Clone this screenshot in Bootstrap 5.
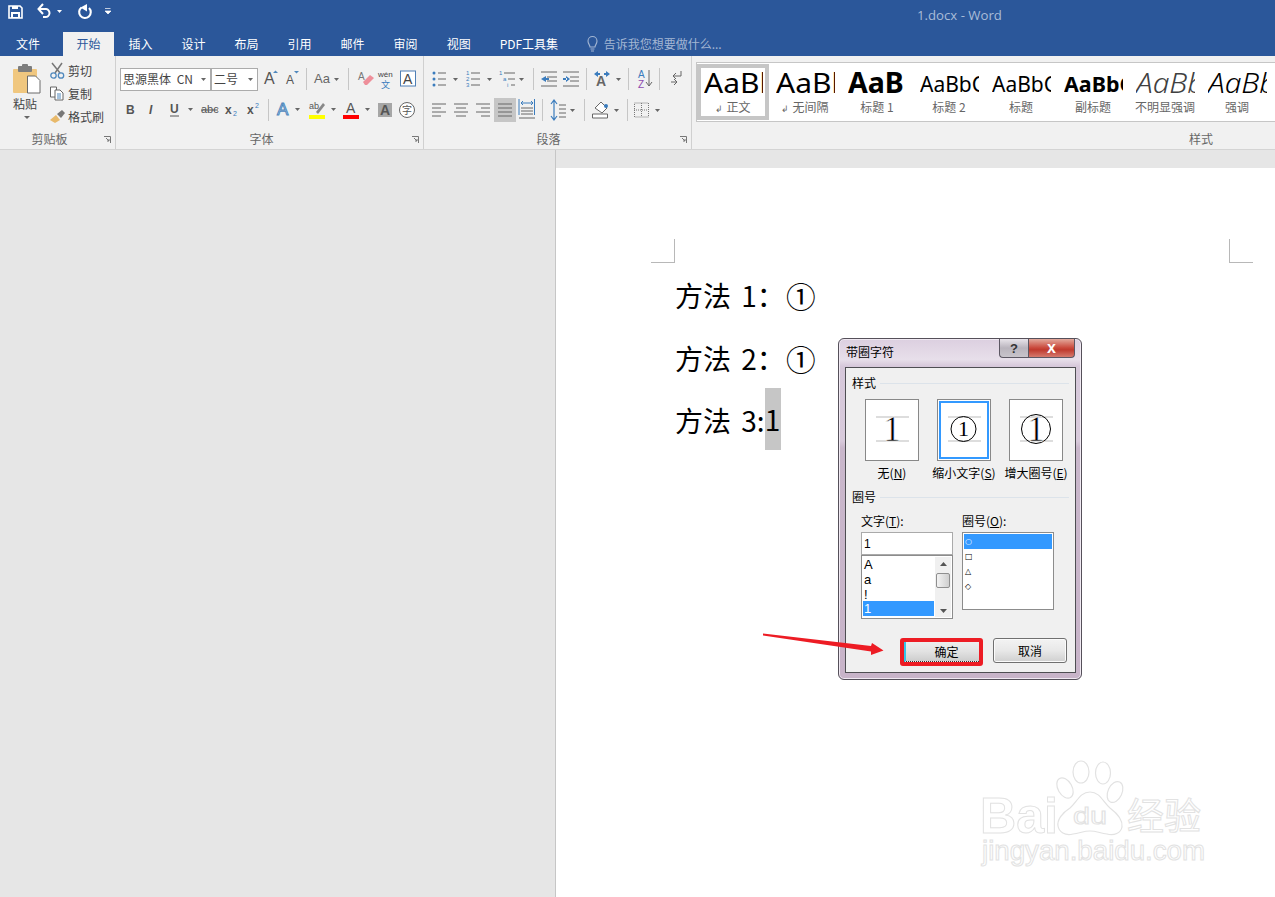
<!DOCTYPE html>
<html lang="zh-CN"><head><meta charset="utf-8"><title>1.docx - Word</title>
<link href="https://cdn.jsdelivr.net/npm/bootstrap@5.3.0/dist/css/bootstrap.min.css" rel="stylesheet">
<style>
html,body{height:100%;overflow:hidden}
body{position:relative;font:12px/16px "Noto Sans CJK SC","Noto Sans",sans-serif;background:#e6e6e6;color:#444}
svg{display:block;flex:none;overflow:visible}
.tbar{height:32px;background:#2b579a;color:#fff}
.qat{padding-left:8px;padding-top:4px}
.doc-title{margin-left:806px;margin-top:1px;font:13.2px/20px "Open Sans",sans-serif;color:#a9bcd8}
.tabs{height:24px;background:#2b579a;padding-left:1.5px}
.tabs .nav-link{height:24px;padding:3px 14.5px 0;color:#fff;font-size:12px;line-height:18px;border-radius:0}
.tabs .nav-link:first-child{padding-right:23px}
.tabs .nav-link.active{background:#f1f1f1;color:#2b579a;padding:3px 13.5px 0}
.bulb{margin-left:14px}
.tellme{color:#a3b6d3;margin-left:6px;padding-top:3px;line-height:18px}
.ribbon{height:94px;background:#f1f1f1;border-bottom:1px solid #d4d4d4}
.grp{height:93px;border-right:1px solid #d0d0d0;flex:none;padding-top:3px}
.g1{width:116px}.g2{width:308px;padding-left:4px}.g3{width:268px;padding-left:8px}.g4{flex:1 1 0;border-right:0;padding-left:4px}
.rows{padding-top:8px}
.row1,.row2{height:24px;display:flex;align-items:center}
.row2{margin-top:7px}
.glabel{margin-top:auto;margin-bottom:1px;height:18px;display:grid;grid-template-columns:1fr auto 1fr 20px;align-items:center;color:#666;line-height:18px}
.g1 .glabel{grid-template-columns:1fr auto 1fr 16px}
.g3 .glabel{grid-template-columns:1fr auto 1fr 26px}
.glabel.gs{grid-template-columns:1fr auto 1fr;padding-left:431px}
.launch{justify-self:end;margin-right:4px}
.sep{display:block;width:1px;height:22px;background:#c6c6c6;flex:none}
.l3{margin-left:3px}.l4{margin-left:4px}.l5{margin-left:5px}.l6{margin-left:6px}.l7{margin-left:7px}.l8{margin-left:8px}.l9{margin-left:9px}.l10{margin-left:10px}.l13{margin-left:13px}.l14{margin-left:14px}.l15{margin-left:15px}
.combo{height:23px;background:#fff;border:1px solid #ababab;color:#444;padding-left:2px;word-spacing:3px}
.combo.c1{width:91px}.combo.c2{width:47px;border-left-width:1px}
.combo svg{margin-left:auto;margin-right:4px}
.paste{width:50px;padding-left:13px;padding-top:5px}
.paste .lb{margin-top:1px;color:#444;line-height:18px}
.clip-item{height:23px;color:#444}
.clip-item svg{margin-right:3px}
.gallery{margin-top:3px;height:60px;background:#fff;border:1px solid #c6c6c6;border-right:0;padding:1px 0 0 0;overflow:hidden}
.sty{width:72px;height:56px;flex:none;padding:0 0 0 7px;overflow:hidden}
.sty.sel{border:4px solid #c6c6c6;padding-left:3px}
.sty.sel .s{margin-top:-4px}.sty.sel .n{margin-left:-7px}
.s{width:59px;height:34px;padding-top:2px;overflow:hidden;white-space:nowrap;font:28px/32px "Noto Sans",sans-serif;color:#000}
.s span{display:inline-block;transform-origin:0 50%;transform:scaleX(1.07)}
.s.h2t{font-size:21px;line-height:28px;padding-top:6px}
.s.h2t span{transform:none}
.s.b{font-weight:700}
.s.b span{transform:scaleX(1.02)}
.s.it{font-style:italic;font-weight:300}
.s.sub{color:#404040}
.n{margin-left:-7px;width:72px;text-align:center;color:#666;line-height:18px}
.ret{font-size:9px;margin-right:3px}
.workspace{height:747px}
.gutter{width:556px;flex:none;border-right:1px solid #c6c6c6}
.page{width:719px;flex:none;margin-top:18px;background:#fff;color:#000;padding-top:71px}
.marks{padding:0 22px 0 95px}
.mk{width:24px;height:24px;border-bottom:1px solid #b8b8b8}
.mk.a{border-right:1px solid #b8b8b8}.mk.b{border-left:1px solid #b8b8b8}
.dtext{padding-left:119px;font:28px/62.5px "Noto Sans CJK SC","Noto Sans",sans-serif;margin:1px 0 0;word-spacing:4px}
.dtext p{margin:0;height:62.5px;white-space:pre}
.dtext .cir{margin-left:1px;display:inline-block;transform:scale(1.06);transform-origin:0 55%}
.dtext mark{background:#c6c6c6;padding:0;color:#000;display:inline-block;height:62px;line-height:62px;vertical-align:top;margin-top:-1px;width:16px;text-align:center}
.dlg{position:absolute;left:838px;top:338px;width:244px;height:342px;border:1px solid #55505a;border-radius:6px;background:linear-gradient(180deg,#dccfe0 0,#e7dfea 6%,#d6c8da 8%,#d8cadb 30%,#c9b7cb 32%,#c8b4c9 100%);color:#000;box-shadow:inset 0 0 0 1px #f0e9f2}
.dlg-t{height:28px;padding:5px 0 0 7px;line-height:16px}
.dlg-btns{position:absolute;right:6px;top:0;display:flex;height:19px}
.hb,.xb{height:19px;border:1px solid #5c5763;border-top:0;display:flex;align-items:center;justify-content:center;font:700 13px/1 "Liberation Sans",sans-serif}
.hb{width:29px;border-radius:0 0 0 4px;border-right:0;background:linear-gradient(#e8e4ea,#b9b4bd 50%,#c8c4cb);color:#333}
.xb{width:47px;border-radius:0 0 4px 0;background:linear-gradient(#e3a99c,#c9473a 50%,#bf3a2e 60%,#d57a6e);color:#fff;font-size:16px}
.panel{margin:0 5.5px 0 6px;height:306px;background:#f0f0f0;border:1px solid #4e4e52;display:flex;flex-direction:column}
.lg{height:16px;padding-left:6px;display:flex;align-items:center;gap:4px;padding-right:6px}
.lg.first{margin-top:7px}.lg.second{margin-top:8px}
.lg::after{content:"";flex:1;height:1px;background:#dce3ea}
.boxes{margin:8px 0 0 10px;display:grid;grid-template-columns:repeat(3,72px)}
.bx{width:54px;height:62px;margin:0 9px;background:#fff;border:1px solid #888;padding:0}
.bx.on{box-shadow:inset 0 0 0 1px #fff,inset 0 0 0 3px #3399ff}
.bx text{font-family:"Liberation Serif",serif;stroke:#fff;stroke-width:.6}
.bx.on text{stroke:none}
.bl{text-align:center;white-space:nowrap;margin-top:4px;height:16px;line-height:16px;font-size:12px}
.cols{display:flex;padding-left:15px;margin-top:8px;gap:9px}
.col-a,.col-b{width:92px}
.cap{height:16px;margin-bottom:3px}
.inp{height:23px;border:1px solid #aaa;border-radius:0;padding:0 2px;font:12px/21px "Liberation Sans",sans-serif;background:#fff;color:#000;display:block;width:100%;min-height:0}
.lst{border:1px solid #8c8c8c;background:#fff;padding:1px;border-radius:0}
.lst.l-a{height:64px;flex-direction:row}
.lst.l-b{height:78px}
.lst .list-group-item{border:0;border-radius:0;padding:0 1px;height:15px;font:13px/15px "Liberation Sans",sans-serif;color:#000;background:transparent}
.lst .list-group-item.active{background:#3399ff;color:#fff}
.lst.l-b .list-group-item{font:8px/15px "DejaVu Sans",sans-serif}
.sb{width:16px;flex:none;background:#f0f0f0;margin-left:1px;display:flex;flex-direction:column;align-items:center;padding-top:5px}
.sb i{display:block;width:14px;height:15px;margin-top:7px;border:1px solid #8f8f8f;border-radius:2px;background:linear-gradient(90deg,#f3f3f3,#cfcfcf)}
.ft{display:flex;padding-left:54px;margin-top:19px;align-items:flex-start;gap:10px}
.redbox{width:83px;height:28px;border:4px solid #ed1c24;border-radius:3px;padding:0}
.redbox .btn,.cancel{font-size:12px;line-height:16px;color:#000;padding:0;border-radius:0}
.redbox .btn{width:100%;height:100%;display:block;border:0;padding-left:8px;border-left:2px solid #35c4e8;border-bottom:1px dotted #333;background:linear-gradient(#ededed,#e2e2e2 50%,#cdcdcd)}
.cancel{width:74px;height:25px;border:1px solid #707070;border-radius:3px;background:linear-gradient(#f3f3f3,#e8e8e8 50%,#cfcfcf);box-shadow:inset 0 0 0 1px #fbfbfb}
.arrow{position:absolute;left:760px;top:630px}
.wm{position:absolute;left:960px;top:750px;pointer-events:none}
.wm text{fill:#fff;stroke:#e2e2e2;stroke-width:1}
.wm ellipse,.wm .pb{fill:#fff;stroke:#e2e2e2;stroke-width:1.2}
.t{font-family:"Liberation Sans",sans-serif}
</style></head><body>

<header>
<div class="tbar d-flex align-items-start qat">
 <svg width="15" height="15"><path d="M1 2h11l2 2v10H1z" fill="none" stroke="#fff" stroke-width="1.600"/><rect x="4" y="2" width="6" height="3" fill="#fff"/><rect x="3" y="8" width="9" height="6" fill="#fff"/><rect x="5" y="10" width="5" height="3" fill="#2b579a"/></svg>
 <svg class="l14" width="15" height="15"><path d="M2 5h7a4 4 0 1 1-1 8H6" fill="none" stroke="#fff" stroke-width="2"/><path d="M6 0 1.500 5 6 10" fill="none" stroke="#fff" stroke-width="2"/></svg>
 <svg class="l5" width="5" height="15"><path d="M0 6h5L2.500 9z" fill="#fff"/></svg>
 <svg class="l15" width="15" height="15"><path d="M4.500 3.500a5.800 5.800 0 1 0 7.500.5" fill="none" stroke="#fff" stroke-width="2.100"/><path d="M10 0v7.500L3.500 3.500z" fill="#fff"/></svg>
 <svg class="l13" width="6" height="15"><path d="M0 4.500h5.500M0 7h6L3 10z" stroke="#fff" fill="#fff" stroke-width=".7"/></svg>
 <div class="doc-title">1.docx - Word</div>
</div>
<nav class="tabs nav flex-nowrap">
 <a class="nav-link" href="#">文件</a><a class="nav-link active" href="#">开始</a><a class="nav-link" href="#">插入</a><a class="nav-link" href="#">设计</a><a class="nav-link" href="#">布局</a><a class="nav-link" href="#">引用</a><a class="nav-link" href="#">邮件</a><a class="nav-link" href="#">审阅</a><a class="nav-link" href="#">视图</a><a class="nav-link" href="#">PDF工具集</a>
 <svg class="bulb" width="11" height="24"><path d="M3 15c0-2-2-3-2-6a4.500 4.500 0 0 1 9 0c0 3-2 4-2 6zM3.500 17h4M4 19h3" fill="none" stroke="#a3b6d3" stroke-width="1.100"/></svg>
 <div class="tellme">告诉我您想要做什么...</div>
</nav>
</header>

<section class="ribbon d-flex">
 <div class="grp g1 d-flex flex-column">
  <div class="d-flex">
   <div class="paste">
    <svg width="28" height="30"><rect x="0" y="5" width="24" height="24" rx="1" fill="#f0c77f"/><rect x="5" y="2" width="14" height="6" rx="1" fill="#7d7d7d"/><rect x="9" y="0" width="6" height="4" rx="1" fill="#7d7d7d"/><path d="M14.500 12h8l4.500 4.500V29H14.500z" fill="#fff" stroke="#6a6a6a"/></svg>
    <div class="lb">粘贴</div>
    <svg width="24" height="8"><path d="M11 3h6l-3 3z" fill="#666"/></svg>
   </div>
   <div>
    <div class="clip-item d-flex align-items-center"><svg width="15" height="16"><path d="M2 0l8 10M12 0 5 10" stroke="#777" stroke-width="1.500"/><circle cx="3.500" cy="12.500" r="2.700" fill="none" stroke="#4f88bd" stroke-width="1.300"/><circle cx="11" cy="12.500" r="2.700" fill="none" stroke="#4f88bd" stroke-width="1.300"/></svg>剪切</div>
    <div class="clip-item d-flex align-items-center"><svg width="15" height="15"><path d="M.5 1h6v10h-6z" fill="#fff" stroke="#666"/><path d="M5 4h5l3 3v7H5z" fill="#fff" stroke="#666"/><path d="M7 8h4M7 10h4M7 12h4" stroke="#4f88bd"/></svg>复制</div>
    <div class="clip-item d-flex align-items-center"><svg width="15" height="14"><path d="M0 10l6-5 4 5-5 3z" fill="#e8b96a"/><path d="M7 4l5-4 3 3-4 5z" fill="#777"/></svg>格式刷</div>
   </div>
  </div>
  <div class="glabel"><span></span><span>剪贴板</span><span></span><svg class="launch" width="7" height="7"><path d="M0 .5h6.500V7M2 2l3 3M5 3v2H3" fill="none" stroke="#777"/></svg></div>
 </div>

 <div class="grp g2 d-flex flex-column">
  <div class="rows">
  <div class="row1">
   <div class="combo c1 d-flex align-items-center text-nowrap">思源黑体 CN<svg width="5" height="3"><path d="M0 0h5L2.500 3z" fill="#666"/></svg></div>
   <div class="combo c2 d-flex align-items-center">二号<svg width="5" height="3"><path d="M0 0h5L2.500 3z" fill="#666"/></svg></div>
   <svg class="l6" width="14" height="24"><text class="t" x="0" y="17" font-size="16" fill="#555">A</text><path d="M9 6h5l-2.500-2.500z" fill="#4f88bd"/></svg>
   <svg class="l8" width="14" height="24"><text class="t" x="0" y="17" font-size="12" fill="#555">A</text><path d="M8 4h5l-2.500 2.500z" fill="#4f88bd"/></svg>
   <i class="sep l6"></i>
   <svg class="l7" width="27" height="24"><text class="t" x="0" y="16" font-size="13" fill="#666">Aa</text><path d="M20 11h5l-2.500 3z" fill="#666"/></svg>
   <i class="sep l7"></i>
   <svg class="l9" width="16" height="24"><text class="t" x="0" y="13" font-size="10" fill="#777">A</text><path d="M5 15l7-7 4 3-7 7H7z" fill="#ee8f9a"/></svg>
   <svg class="l4" width="16" height="24"><text class="t" x="0" y="10" font-size="8" fill="#444">wén</text><text x="3" y="21" font-size="9" fill="#3b7cbd">文</text></svg>
   <svg class="l6" width="16" height="24"><rect x=".5" y="4" width="15" height="15" fill="#fff" stroke="#4f7fb5"/><text class="t" x="3" y="17" font-size="14" fill="#444">A</text></svg>
  </div>
  <div class="row2">
   <svg class="l4" width="12" height="24"><text class="t" x="2" y="16" font-size="12" font-weight="700" fill="#555">B</text></svg>
   <svg class="l10" width="12" height="24"><text x="3" y="16" font-size="12" font-style="italic" class="t" font-weight="700" fill="#555">I</text></svg>
   <svg class="l10" width="28" height="24"><text class="t" x="2" y="15" font-size="12" font-weight="700" fill="#555">U</text><path d="M2 18h9" stroke="#555"/><path d="M20 10h5l-2.500 3z" fill="#666"/></svg>
   <svg class="l5" width="16" height="24"><text class="t" x="0" y="15" font-size="11" fill="#555">abc</text><path d="M0 12h17" stroke="#555"/></svg>
   <svg class="l8" width="14" height="24"><text class="t" x="0" y="16" font-size="12" font-weight="700" fill="#555">x</text><text class="t" x="8" y="18" font-size="7" fill="#3b7cbd">2</text></svg>
   <svg class="l8" width="14" height="24"><text class="t" x="0" y="16" font-size="12" font-weight="700" fill="#555">x</text><text class="t" x="8" y="10" font-size="7" fill="#3b7cbd">2</text></svg>
   <i class="sep l7"></i>
   <svg class="l8" width="26" height="24"><text class="t" x="0" y="17" font-size="17" fill="#dfeaf6" stroke="#4f88bd" stroke-width="1">A</text><path d="M18 10h5l-2.500 3z" fill="#666"/></svg>
   <svg class="l6" width="28" height="24"><text class="t" x="0" y="11" font-size="9" fill="#555">ab</text><path d="M7 14l7-9 2 2-7 9z" fill="#888"/><rect x="0" y="17" width="16" height="4" fill="#ffff00"/><path d="M22 10h5l-2.500 3z" fill="#666"/></svg>
   <svg class="l6" width="28" height="24"><text class="t" x="3" y="15" font-size="14" fill="#555">A</text><rect x="0" y="17" width="16" height="4" fill="#f00"/><path d="M22 10h5l-2.500 3z" fill="#666"/></svg>
   <svg class="l7" width="14" height="24"><rect x="0" y="5" width="14" height="14" fill="#a6a6a6"/><text class="t" x="2" y="17" font-size="14" font-weight="700" fill="#555">A</text></svg>
   <svg class="l7" width="16" height="24"><circle cx="8" cy="12" r="7.500" fill="#fff" stroke="#666"/><text x="3" y="16" font-size="10" fill="#555">字</text></svg>
  </div>
  </div>
  <div class="glabel"><span></span><span>字体</span><span></span><svg class="launch" width="7" height="7"><path d="M0 .5h6.500V7M2 2l3 3M5 3v2H3" fill="none" stroke="#777"/></svg></div>
 </div>

 <div class="grp g3 d-flex flex-column">
  <div class="rows">
  <div class="row1">
   <svg width="29" height="24"><path d="M6 6h8M6 12h8M6 18h8" stroke="#666"/><circle cx="2" cy="6" r="1.500" fill="#3b7cbd"/><circle cx="2" cy="12" r="1.500" fill="#3b7cbd"/><circle cx="2" cy="18" r="1.500" fill="#3b7cbd"/><path d="M21 11h5l-2.500 3z" fill="#666"/></svg>
   <svg class="l5" width="29" height="24"><path d="M5 6h9M5 12h9M5 18h9" stroke="#666"/><text class="t" x="0" y="8" font-size="6" fill="#3b7cbd">1</text><text class="t" x="0" y="14" font-size="6" fill="#3b7cbd">2</text><text class="t" x="0" y="20" font-size="6" fill="#3b7cbd">3</text><path d="M21 11h5l-2.500 3z" fill="#666"/></svg>
   <svg class="l4" width="28" height="24"><path d="M5 6h11M9 12h7M12 18h4" stroke="#666"/><text class="t" x="0" y="8" font-size="6" fill="#3b7cbd">1</text><text class="t" x="4" y="14" font-size="6" fill="#3b7cbd">a</text><text class="t" x="8" y="20" font-size="6" fill="#3b7cbd">i</text><path d="M20 11h5l-2.500 3z" fill="#666"/></svg>
   <i class="sep l6"></i>
   <svg class="l7" width="16" height="24"><path d="M0 5h16M6 10h10M6 14h10M0 19h16" stroke="#666"/><path d="M0 12l5-3v6zM4 11h4v2H4z" fill="#3b7cbd"/></svg>
   <svg class="l6" width="16" height="24"><path d="M0 5h16M7 10h9M7 14h9M0 19h16" stroke="#666"/><path d="M7 12l-4-3v6zM0 11h4v2H0z" fill="#3b7cbd"/></svg>
   <i class="sep l7"></i>
   <svg class="l7" width="28" height="24"><text class="t" x="2" y="19" font-size="14" font-weight="700" fill="#666">A</text><path d="M0 7l4-3v2h2v2H4v2zM16 7l-4-3v2h-2v2h2v2z" fill="#3b7cbd"/><path d="M22 11h5l-2.500 3z" fill="#666"/></svg>
   <i class="sep l6"></i>
   <svg class="l9" width="14" height="24"><text class="t" x="0" y="11" font-size="10" fill="#3b7cbd">A</text><text class="t" x="0" y="21" font-size="10" fill="#8e4bb0">Z</text><path d="M11 3v16M8 15l3 4 3-4" fill="none" stroke="#666"/></svg>
   <i class="sep l7"></i>
   <svg class="l10" width="12" height="24"><path d="M11 4v5H3M6 6 3 9l3 3" fill="none" stroke="#666"/><path d="M1 15h6M4 12l3 3-3 3" fill="none" stroke="#666"/></svg>
  </div>
  <div class="row2">
   <svg width="14" height="24"><path d="M0 6h14M0 10h9M0 14h14M0 18h9" stroke="#666"/></svg>
   <svg class="l8" width="14" height="24"><path d="M0 6h14M2 10h10M0 14h14M2 18h10" stroke="#666"/></svg>
   <svg class="l8" width="14" height="24"><path d="M0 6h14M5 10h9M0 14h14M5 18h9" stroke="#666"/></svg>
   <svg class="l4" width="22" height="24"><rect width="22" height="24" fill="#c6c6c6"/><path d="M4 6h14M4 10h14M4 14h14M4 18h14" stroke="#666"/></svg>
   <svg class="l3" width="16" height="24"><path d="M0 1v16M15.500 1v16" stroke="#3b7cbd"/><path d="M2 5h12M4 3 2 5l2 2M12 3l2 2-2 2" fill="none" stroke="#3b7cbd"/><path d="M2 10h12M2 13h12M2 16h12M0 20h16" stroke="#666"/></svg>
   <i class="sep l7"></i>
   <svg class="l8" width="27" height="24"><path d="M3 2v20M0 6l3-4 3 4M0 18l3 4 3-4" fill="none" stroke="#3b7cbd" stroke-width="1.200"/><path d="M8 7h7M8 11h7M8 15h7M8 19h7" stroke="#666"/><path d="M19 11h5l-2.500 3z" fill="#666"/></svg>
   <i class="sep l6"></i>
   <svg class="l7" width="29" height="24"><path d="M3 10l6-6 6 6-5 5z" fill="#fff" stroke="#666"/><circle cx="14" cy="8" r="2" fill="#3b7cbd"/><path d="M.5 16h15v4H.5z" fill="#fff" stroke="#666"/><path d="M22 11h5l-2.500 3z" fill="#666"/></svg>
   <i class="sep l6"></i>
   <svg class="l6" width="29" height="24"><rect x=".5" y="5" width="14" height="14" fill="none" stroke="#777" stroke-dasharray="1 1"/><path d="M7.500 5v14M0 12h14" stroke="#777" stroke-dasharray="1 1"/><path d="M21 11h5l-2.500 3z" fill="#666"/></svg>
  </div>
  </div>
  <div class="glabel"><span></span><span>段落</span><span></span><svg class="launch" width="7" height="7"><path d="M0 .5h6.500V7M2 2l3 3M5 3v2H3" fill="none" stroke="#777"/></svg></div>
 </div>

 <div class="grp g4 d-flex flex-column">
  <div class="gallery d-flex">
   <div class="sty sel"><div class="s"><span>AaBb</span></div><div class="n"><span class="ret">↲</span>正文</div></div>
   <div class="sty"><div class="s"><span>AaBb</span></div><div class="n"><span class="ret">↲</span>无间隔</div></div>
   <div class="sty"><div class="s b"><span>AaB</span></div><div class="n">标题 1</div></div>
   <div class="sty"><div class="s h2t"><span>AaBbC</span></div><div class="n">标题 2</div></div>
   <div class="sty"><div class="s h2t"><span>AaBbC</span></div><div class="n">标题</div></div>
   <div class="sty"><div class="s h2t b"><span>AaBbC</span></div><div class="n">副标题</div></div>
   <div class="sty"><div class="s it sub"><span>AaBb</span></div><div class="n">不明显强调</div></div>
   <div class="sty"><div class="s it"><span>AaBb</span></div><div class="n">强调</div></div>
  </div>
  <div class="glabel gs"><span></span><span>样式</span><span></span></div>
 </div>
</section>

<main class="workspace d-flex">
 <div class="gutter"></div>
 <article class="page">
  <div class="marks d-flex justify-content-between"><div class="mk a"></div><div class="mk b"></div></div>
  <div class="dtext">
   <p>方法 1：<span class="cir">①</span></p>
   <p>方法 2：<span class="cir">①</span></p>
   <p>方法 3:<mark>1</mark></p>
  </div>
 </article>
</main>

<div class="dlg" role="dialog">
 <div class="dlg-t">带圈字符</div>
 <div class="dlg-btns"><div class="hb">?</div><div class="xb">x</div></div>
 <div class="panel">
  <div class="lg first">样式</div>
  <div class="boxes">
   <div><div class="bx"><svg width="52" height="60"><path d="M10 17h33M10 41h33" stroke="#bbb"/><text x="26" y="41" text-anchor="middle" font-size="36">1</text></svg></div><div class="bl">无(<u>N</u>)</div></div>
   <div><div class="bx on"><svg width="52" height="60"><path d="M10 17h33M10 41h33" stroke="#bbb"/><circle cx="25.500" cy="29" r="12.500" fill="none" stroke="#000"/><text x="25.500" y="36" text-anchor="middle" font-size="22">1</text></svg></div><div class="bl">缩小文字(<u>S</u>)</div></div>
   <div><div class="bx"><svg width="52" height="60"><path d="M10 17h33M10 41h33" stroke="#bbb"/><circle cx="26" cy="29" r="14.500" fill="none" stroke="#000"/><text x="26" y="41" text-anchor="middle" font-size="36">1</text></svg></div><div class="bl">增大圈号(<u>E</u>)</div></div>
  </div>
  <div class="lg second">圈号</div>
  <div class="cols">
   <div class="col-a">
    <div class="cap">文字(<u>T</u>):</div>
    <input class="form-control inp" value="1">
    <div class="lst l-a d-flex">
     <div class="list-group flex-fill">
      <div class="list-group-item">A</div><div class="list-group-item">a</div><div class="list-group-item">!</div><div class="list-group-item active">1</div>
     </div>
     <div class="sb"><svg width="7" height="4"><path d="M0 4h7L3.500 0z" fill="#555"/></svg><i></i><svg width="7" height="4" class="mt-auto mb-1"><path d="M0 0h7L3.500 4z" fill="#555"/></svg></div>
    </div>
   </div>
   <div class="col-b">
    <div class="cap">圈号(<u>O</u>):</div>
    <div class="lst l-b list-group">
     <div class="list-group-item active">○</div><div class="list-group-item">□</div><div class="list-group-item">△</div><div class="list-group-item">◇</div>
    </div>
   </div>
  </div>
  <div class="ft">
   <div class="redbox"><button class="btn" type="button">确定</button></div>
   <button class="btn cancel" type="button">取消</button>
  </div>
 </div>
</div>

<svg class="arrow" width="130" height="30"><path d="M3 3.500V5.500L111 21.500 111 25 123.500 20.500 112 13 111 16z" fill="#ed1c24"/></svg>

<svg class="wm" width="260" height="130">
 <ellipse cx="121" cy="22" rx="8" ry="11"/><ellipse cx="143" cy="23" rx="7.500" ry="11"/><ellipse cx="105" cy="38" rx="7" ry="11" transform="rotate(-30 105 38)"/><ellipse cx="155" cy="42" rx="7" ry="11" transform="rotate(25 155 42)"/>
 <path class="pb" d="M130 42c10 0 13 10 20 16 8 6 13 12 12 19-1 6-8 9-15 7-7-1-11-3-17-3s-10 2-17 3c-8 2-14-2-15-8-1-6 4-13 12-18 7-6 10-16 20-16z"/>
 <text class="t" x="20" y="83" font-size="50" font-weight="700" textLength="78" lengthAdjust="spacingAndGlyphs">Bai</text>
 <text class="t" x="113" y="74" font-size="24" textLength="34" lengthAdjust="spacingAndGlyphs">du</text>
 <text x="167" y="80" font-size="37" font-family="Noto Sans CJK SC">经验</text>
 <text class="t" x="22" y="110" font-size="27" textLength="223" lengthAdjust="spacingAndGlyphs">jingyan.baidu.com</text>
</svg>

<script src="https://cdn.jsdelivr.net/npm/bootstrap@5.3.0/dist/js/bootstrap.bundle.min.js"></script>
</body></html>
